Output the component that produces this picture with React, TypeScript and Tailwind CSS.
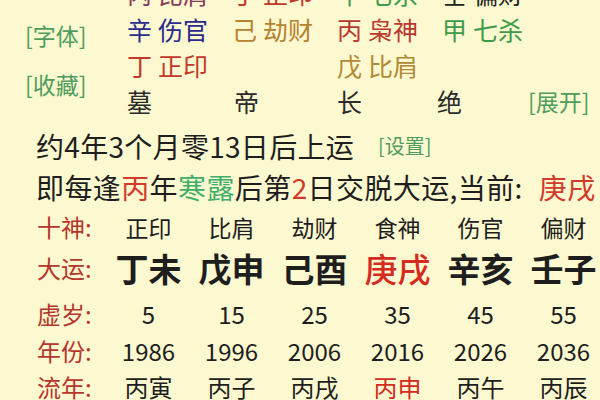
import React from "react";

const F = { fontFamily: '"Noto Sans CJK SC", "Noto Sans", sans-serif' };

type Cell = { g: string; s: string; c: string } | null;

const topRows: Cell[][] = [
  [
    { g: "丙", s: "比肩", c: "text-[#8a3a5a]" },
    { g: "丁", s: "正印", c: "text-[#c0392b]" },
    { g: "甲", s: "七杀", c: "text-[#3f9a4a]" },
    { g: "壬", s: "偏财", c: "text-[#222]" },
  ],
  [
    { g: "辛", s: "伤官", c: "text-[#2b2b8c]" },
    { g: "己", s: "劫财", c: "text-[#b5822f]" },
    { g: "丙", s: "枭神", c: "text-[#b83a2e]" },
    { g: "甲", s: "七杀", c: "text-[#3f9a4a]" },
  ],
  [
    { g: "丁", s: "正印", c: "text-[#c0392b]" },
    null,
    { g: "戊", s: "比肩", c: "text-[#b08a35]" },
    null,
  ],
];

const shishen = ["正印", "比肩", "劫财", "食神", "伤官", "偏财"];
const dayun = ["丁未", "戊申", "己酉", "庚戌", "辛亥", "壬子"];
const xusui = ["5", "15", "25", "35", "45", "55"];
const years = ["1986", "1996", "2006", "2016", "2026", "2036"];
const liunian = ["丙寅", "丙子", "丙戌", "丙申", "丙午", "丙辰"];

function Row({
  label,
  items,
  h,
  cls,
  redIdx,
  redCls = "",
}: {
  label: string;
  items: string[];
  h: string;
  cls: string;
  redIdx?: number;
  redCls?: string;
}) {
  return (
    <div className={`flex items-center ${h}`}>
      <div className="w-[107px] pl-[37px] shrink-0 text-[24px] leading-none text-[#b5362c] whitespace-nowrap">
        {label}
      </div>
      {items.map((t, i) => (
        <div
          key={i}
          className={`w-[83px] shrink-0 text-center leading-none whitespace-nowrap ${cls} ${
            i === redIdx ? `text-[#d42a20] ${redCls}` : "text-[#1e1e1e]"
          }`}
        >
          {t}
        </div>
      ))}
    </div>
  );
}

export default function App() {
  return (
    <div
      className="w-[600px] h-[400px] overflow-hidden bg-[#fcf8d0] relative"
      style={F}
    >
      {/* top pillar area */}
      <div className="flex -mt-[25px]">
        <div className="w-[127px] shrink-0 flex flex-col pl-[25px] pt-[49px] gap-[26px] text-[23px] leading-none text-[#4f9d5e]">
          <div>[字体]</div>
          <div>[收藏]</div>
        </div>
        <div className="flex flex-col">
          {topRows.map((row, ri) => (
            <div key={ri} className="flex h-[36px] items-center">
              {row.map((c, ci) => (
                <div
                  key={ci}
                  className={`w-[105px] shrink-0 text-[25px] leading-none whitespace-nowrap ${
                    c ? c.c : ""
                  }`}
                >
                  {c ? (
                    <>
                      {c.g}
                      <span className="ml-[6px]">{c.s}</span>
                    </>
                  ) : null}
                </div>
              ))}
            </div>
          ))}
          <div className="flex h-[36px] items-center text-[25px] leading-none text-[#2a2a2a]">
            <div className="w-[105px] shrink-0">墓</div>
            <div className="w-[105px] shrink-0 pl-[2px]">帝</div>
            <div className="w-[100px] shrink-0">长</div>
            <div className="w-[91px] shrink-0">绝</div>
            <div className="text-[23px] text-[#4f9d5e] whitespace-nowrap">[展开]</div>
          </div>
        </div>
      </div>

      {/* info lines */}
      <div className="pl-[36px] mt-[8px] flex items-center h-[38px] whitespace-nowrap">
        <span className="text-[28px] leading-none text-[#1e1e1e] tracking-[0.3px]">约4年3个月零13日后上运</span>
        <span className="ml-[24px] text-[20px] leading-none text-[#4f9d5e]">[设置]</span>
      </div>
      <div className="pl-[36px] mt-[3px] flex items-center h-[38px] whitespace-nowrap text-[28px] leading-none text-[#1e1e1e] tracking-[0.4px]">
        <span>即每逢</span>
        <span className="text-[#d13a2c]">丙</span>
        <span>年</span>
        <span className="text-[#3fae6a]">寒露</span>
        <span>后第</span>
        <span className="text-[#d13a2c]">2</span>
        <span>日交脱大运,当前:</span>
        <span className="ml-[16px] text-[#d13a2c]">庚戌</span>
      </div>

      {/* table */}
      <div className="mt-[1px]">
        <Row label="十神:" items={shishen} h="h-[40px]" cls="text-[23px]" />
        <Row
          label="大运:"
          items={dayun}
          h="h-[42px]"
          cls="text-[33px] font-bold"
          redIdx={3}
          redCls="!font-medium"
        />
        <div className="mt-[6px]">
          <Row label="虚岁:" items={xusui} h="h-[38px]" cls="text-[24px]" />
        </div>
        <Row label="年份:" items={years} h="h-[36px]" cls="text-[24px]" />
        <Row label="流年:" items={liunian} h="h-[36px]" cls="text-[24px]" redIdx={3} />
      </div>
    </div>
  );
}
